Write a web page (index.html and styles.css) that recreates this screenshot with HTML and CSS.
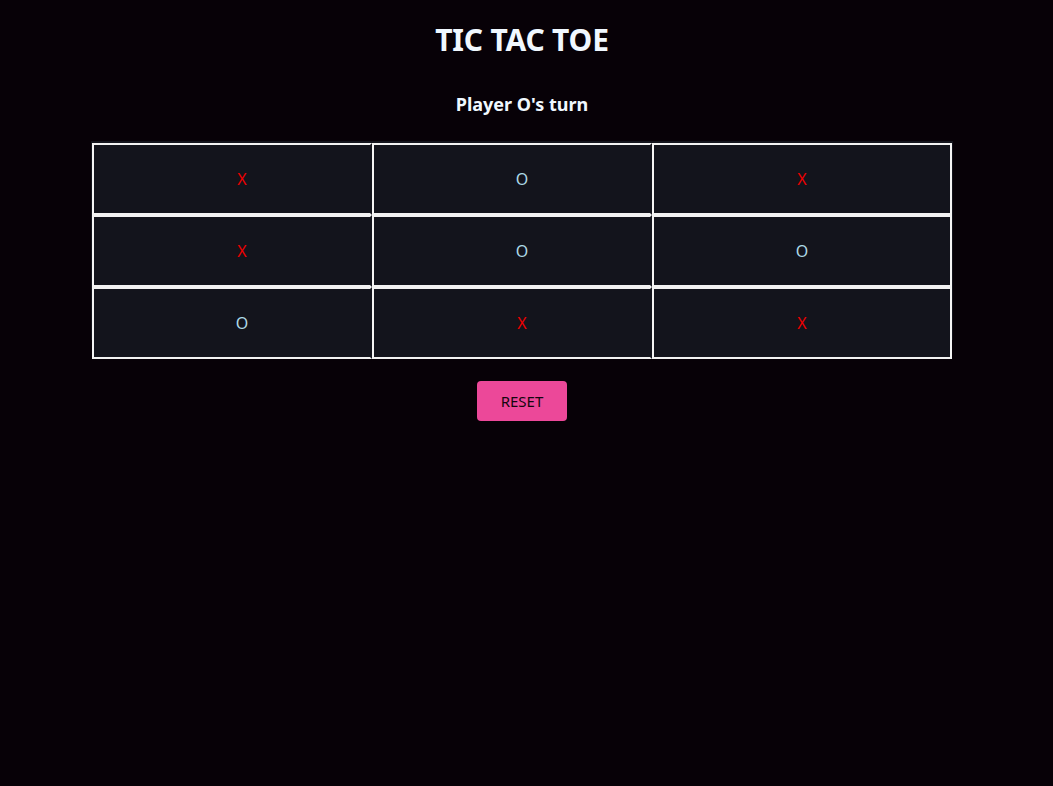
FILE: index.html
```html
<!DOCTYPE html>
<html lang="en">
<head>
<meta charset="utf-8">
<title>Tic Tac Toe</title>
<link rel="stylesheet" href="styles.css">
</head>
<body>
<div class="app">
  <h1 class="title">TIC TAC TOE</h1>
  <h3 class="status">Player O's turn</h3>
  <div class="board">
    <div class="grid">
      <div class="cell x">X</div>
      <div class="cell o">O</div>
      <div class="cell last x">X</div>
      <div class="cell x">X</div>
      <div class="cell o">O</div>
      <div class="cell last o">O</div>
      <div class="cell o">O</div>
      <div class="cell x">X</div>
      <div class="cell last x">X</div>
    </div>
  </div>
  <button class="reset">RESET</button>
</div>
</body>
</html>
```
FILE: styles.css
```css
html, body {
  margin: 0;
  padding: 0;
  background: #070107;
}
body {
  font-family: "Noto Sans", "Open Sans", sans-serif;
  color: #f0f8ff;
}
.app {
  width: 1044px;
  display: flex;
  flex-direction: column;
  align-items: center;
}
.title {
  margin: 20px 0 0;
  font-size: 30px;
  line-height: 40px;
  font-weight: 700;
  letter-spacing: -0.2px;
}
.status {
  margin: 32px 0 0;
  font-size: 18px;
  line-height: 24px;
  font-weight: 700;
}
.board {
  margin-top: 25px;
  width: 862px;
  height: 199px;
  box-sizing: border-box;
  padding: 2px 1px 0 1px;
  background: #13141c;
}
.grid {
  display: grid;
  grid-template-columns: 280px 280px 300px;
  grid-auto-rows: 72px;
}
.cell {
  box-sizing: border-box;
  background: #13141c;
  border-top: 2px solid #f2f2f2;
  border-bottom: 2px solid #f2f2f2;
  border-left: 2px solid #f5f5f5;
  border-right: 2px solid #13141c;
  padding-left: 20px;
  display: flex;
  align-items: center;
  justify-content: center;
  font-size: 16px;
}
.cell.last {
  padding-left: 0;
  border-right-color: #f5f5f5;
}
.x { color: #ee0000; }
.o { color: #add8e6; }
.reset {
  margin-top: 41px;
  width: 90px;
  height: 40px;
  border: none;
  border-radius: 4px;
  background: #ec4899;
  color: #14060e;
  font-family: "Noto Sans", "Open Sans", sans-serif;
  font-size: 15px;
  cursor: pointer;
}
```
